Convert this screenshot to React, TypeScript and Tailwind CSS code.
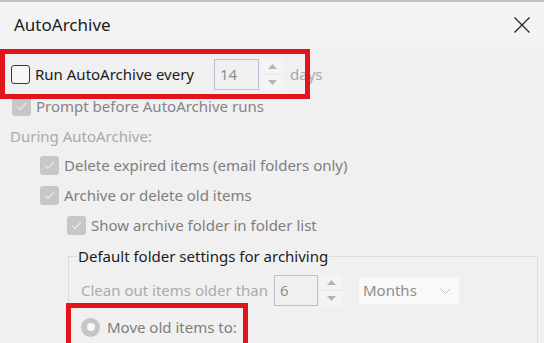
import React from "react";

const font = { fontFamily: '"Noto Sans", "Open Sans", sans-serif' };

function Check({ checked = false, disabled = false }: { checked?: boolean; disabled?: boolean }) {
  if (!disabled) {
    return <div className="w-[19px] h-[19px] rounded-[3px] border border-[#3a3a3a] bg-[#f7f7f7] shrink-0" />;
  }
  return (
    <div className="w-[19px] h-[19px] rounded-[3px] bg-[#c7c7c7] shrink-0 flex items-center justify-center">
      {checked && (
        <svg width="11" height="9" viewBox="0 0 11 9" fill="none">
          <path d="M1 4.6 L4 7.5 L10 1.2" stroke="#ececec" strokeWidth="1.1" />
        </svg>
      )}
    </div>
  );
}

function Spinner() {
  return (
    <div className="w-[22px] h-[31px] bg-[#f4f4f4] flex flex-col shrink-0">
      <div className="flex-1 flex items-center justify-center border-b border-[#e6e6e6]">
        <svg width="9" height="5" viewBox="0 0 9 5">
          <path d="M0 5 L4.5 0 L9 5 Z" fill="#b4b4b4" />
        </svg>
      </div>
      <div className="flex-1 flex items-center justify-center">
        <svg width="9" height="5" viewBox="0 0 9 5">
          <path d="M0 0 L9 0 L4.5 5 Z" fill="#b4b4b4" />
        </svg>
      </div>
    </div>
  );
}

function NumberBox({ value, width }: { value: string; width: string }) {
  return (
    <div className={`${width} h-[31px] border border-[#b7c1d3] bg-[#f0f0f0] pl-[5px] flex items-center text-[#8e8e8e] shrink-0`}>
      {value}
    </div>
  );
}

export default function App() {
  return (
    <div className="relative w-[544px] h-[343px] overflow-hidden bg-[#f0f0f0] text-[15px] whitespace-nowrap" style={font}>
      {/* Title bar */}
      <div className="h-[48px] border-t-2 border-[#c3c3c3] bg-[#f3f3f3] flex items-center justify-between pl-[14px] pr-[14px]">
        <span className="text-[17px] text-[#1b1b1b]">AutoArchive</span>
        <svg width="16" height="16" viewBox="0 0 16 16">
          <path d="M0.5 0.5 L15.5 15.5 M15.5 0.5 L0.5 15.5" stroke="#222" strokeWidth="1.2" />
        </svg>
      </div>

      {/* Run every */}
      <div className="h-[43px] pt-[10px]">
        <div className="h-[33px] flex items-center pl-[11px]">
          <Check />
          <span className="ml-[5px] w-[179px] text-[#1b1b1b]">Run AutoArchive every</span>
          <NumberBox value="14" width="w-[45px]" />
          <div className="ml-[2px]">
            <Spinner />
          </div>
          <span className="ml-[7px] text-[#a8a8a8]">days</span>
        </div>
      </div>

      <div className="h-[31px] flex items-center pl-[12px]">
        <Check checked disabled />
        <span className="ml-[5px] text-[#858585]">Prompt before AutoArchive runs</span>
      </div>

      <div className="h-[29px] flex items-center pl-[10px] text-[#a9a9a9]">During AutoArchive:</div>

      <div className="h-[29px] flex items-center pl-[40px]">
        <Check checked disabled />
        <span className="ml-[5px] text-[#7e7e7e]">Delete expired items (email folders only)</span>
      </div>

      <div className="h-[30px] flex items-center pl-[40px]">
        <Check checked disabled />
        <span className="ml-[5px] text-[#7e7e7e]">Archive or delete old items</span>
      </div>

      <div className="h-[31px] flex items-center pl-[67px]">
        <Check checked disabled />
        <span className="ml-[5px] text-[#7e7e7e]">Show archive folder in folder list</span>
      </div>

      <fieldset className="ml-[68px] mt-[4px] w-[470px] h-[140px] border border-[#dcdcdc] pl-[8px]">
        <legend className="px-[1px] text-[#1b1b1b] leading-[22px]">Default folder settings for archiving</legend>
        <div className="h-[44px] pt-[3px] flex items-center">
          <span className="w-[197px] pl-[4px] text-[#ababab]">Clean out items older than</span>
          <NumberBox value="6" width="w-[44px]" />
          <div className="ml-[2px]">
            <Spinner />
          </div>
          <div className="ml-[17px] w-[100px] h-[27px] bg-[#f9f9f9] flex items-center justify-between pl-[4px] pr-[8px] text-[#8e8e8e]">
            <span>Months</span>
            <svg width="11" height="6" viewBox="0 0 11 6" fill="none">
              <path d="M0.5 0.5 L5.5 5.5 L10.5 0.5" stroke="#c2c2c2" strokeWidth="1" />
            </svg>
          </div>
        </div>
        <div className="h-[32px] flex items-center pl-[4px]">
          <div className="w-[19px] h-[19px] rounded-full bg-[#c5c5c5] flex items-center justify-center shrink-0">
            <div className="w-[8px] h-[8px] rounded-full bg-[#f7f7f7]" />
          </div>
          <span className="ml-[7px] text-[#7e7e7e]">Move old items to:</span>
        </div>
      </fieldset>

      {/* Red annotation boxes */}
      <div className="absolute left-0 top-[49px] w-[310px] h-[50px] border-[5px] border-[#e2141c] pointer-events-none" />
      <div className="absolute left-[66px] top-[303px] w-[182px] h-[50px] border-[5px] border-[#e2141c] pointer-events-none" />
    </div>
  );
}
